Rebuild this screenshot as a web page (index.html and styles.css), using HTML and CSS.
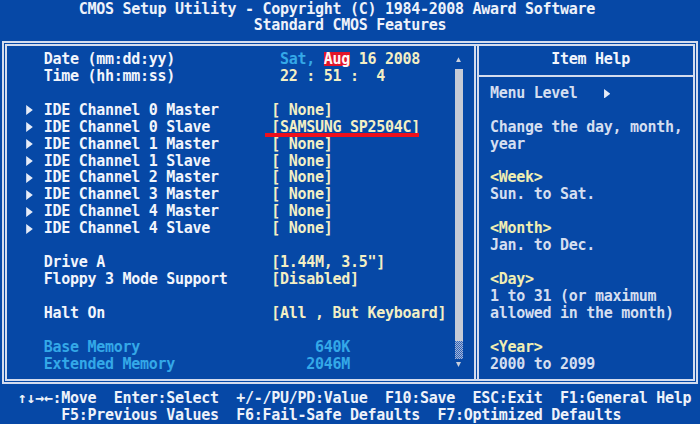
FILE: index.html
```html
<!DOCTYPE html>
<html lang="en">
<head>
<meta charset="utf-8">
<title>CMOS Setup Utility - Standard CMOS Features</title>
<link rel="stylesheet" href="styles.css">
</head>
<body>
<div class="screen">
  <header class="title">
    <div class="line t1">CMOS Setup Utility - Copyright (C) 1984-2008 Award Software</div>
    <div class="line t2">Standard CMOS Features</div>
  </header>

  <main class="box">
    <section class="left">
      <div class="list">
        <div class="row"><span class="arr"></span><span class="label">Date (mm:dd:yy)</span><span class="val"> <span class="cyan">Sat,</span> <span class="sel">Aug</span> 16 2008</span></div>
        <div class="row"><span class="arr"></span><span class="label">Time (hh:mm:ss)</span><span class="val"> 22 : 51 :  4</span></div>
        <div class="row"></div>
        <div class="row"><span class="arr"><svg class="tri" viewBox="0 0 6 9" width="7" height="10"><polygon points="0,0 6,4.5 0,9"/></svg></span><span class="label">IDE Channel 0 Master</span><span class="val">[ None]</span></div>
        <div class="row"><span class="arr"><svg class="tri" viewBox="0 0 6 9" width="7" height="10"><polygon points="0,0 6,4.5 0,9"/></svg></span><span class="label">IDE Channel 0 Slave</span><span class="val mark">[SAMSUNG SP2504C]</span></div>
        <div class="row"><span class="arr"><svg class="tri" viewBox="0 0 6 9" width="7" height="10"><polygon points="0,0 6,4.5 0,9"/></svg></span><span class="label">IDE Channel 1 Master</span><span class="val">[ None]</span></div>
        <div class="row"><span class="arr"><svg class="tri" viewBox="0 0 6 9" width="7" height="10"><polygon points="0,0 6,4.5 0,9"/></svg></span><span class="label">IDE Channel 1 Slave</span><span class="val">[ None]</span></div>
        <div class="row"><span class="arr"><svg class="tri" viewBox="0 0 6 9" width="7" height="10"><polygon points="0,0 6,4.5 0,9"/></svg></span><span class="label">IDE Channel 2 Master</span><span class="val">[ None]</span></div>
        <div class="row"><span class="arr"><svg class="tri" viewBox="0 0 6 9" width="7" height="10"><polygon points="0,0 6,4.5 0,9"/></svg></span><span class="label">IDE Channel 3 Master</span><span class="val">[ None]</span></div>
        <div class="row"><span class="arr"><svg class="tri" viewBox="0 0 6 9" width="7" height="10"><polygon points="0,0 6,4.5 0,9"/></svg></span><span class="label">IDE Channel 4 Master</span><span class="val">[ None]</span></div>
        <div class="row"><span class="arr"><svg class="tri" viewBox="0 0 6 9" width="7" height="10"><polygon points="0,0 6,4.5 0,9"/></svg></span><span class="label">IDE Channel 4 Slave</span><span class="val">[ None]</span></div>
        <div class="row"></div>
        <div class="row"><span class="arr"></span><span class="label">Drive A</span><span class="val">[1.44M, 3.5"]</span></div>
        <div class="row"><span class="arr"></span><span class="label">Floppy 3 Mode Support</span><span class="val">[Disabled]</span></div>
        <div class="row"></div>
        <div class="row"><span class="arr"></span><span class="label">Halt On</span><span class="val">[All , But Keyboard]</span></div>
        <div class="row"></div>
        <div class="row info"><span class="arr"></span><span class="label">Base Memory</span><span class="val">     640K</span></div>
        <div class="row info"><span class="arr"></span><span class="label">Extended Memory</span><span class="val">    2046M</span></div>
      </div>
      <div class="scroll">
        <div class="sb-up"><svg viewBox="0 0 5 5" width="5" height="5.3"><polygon points="2.5,0 5,5 0,5"/></svg></div>
        <div class="sb-track"></div>
        <div class="sb-hatch"></div>
        <div class="sb-down"><svg viewBox="0 0 5 5" width="5" height="5"><polygon points="0,0 5,0 2.5,5"/></svg></div>
      </div>
    </section>

    <aside class="help">
      <div class="help-head">Item Help</div>
      <div class="sep"></div>
      <div class="help-body">
        <p class="menu">Menu Level   <svg class="tri" viewBox="0 0 6 9" width="6.5" height="9.5"><polygon points="0,0 6,4.5 0,9"/></svg></p>
        <p>Change the day, month, year</p>
        <p><span class="key">&lt;Week&gt;</span><br>Sun. to Sat.</p>
        <p><span class="key">&lt;Month&gt;</span><br>Jan. to Dec.</p>
        <p><span class="key">&lt;Day&gt;</span><br>1 to 31 (or maximum allowed in the month)</p>
        <p><span class="key">&lt;Year&gt;</span><br>2000 to 2099</p>
      </div>
    </aside>
  </main>

  <footer class="keys">
    <div class="line k1">↑↓→←:Move  Enter:Select  +/-/PU/PD:Value  F10:Save  ESC:Exit  F1:General Help</div>
    <div class="line k2">F5:Previous Values  F6:Fail-Safe Defaults  F7:Optimized Defaults</div>
  </footer>
</div>
</body>
</html>
```

FILE: styles.css
```css
:root {
  --c: 8.75px;
  --r: 16.96px;
  --blue: #0648a6;
  --line: #d4dcee;
  --white: #eef2fa;
  --val: #f3efc4;
  --cyan: #34a8e8;
  --help: #d4def0;
  --key: #f0eeb2;
}

html, body {
  margin: 0;
  background: var(--blue);
}

body {
  width: 700px;
  height: 424px;
  overflow: hidden;
  font-family: "DejaVu Sans Mono", "Liberation Mono", monospace;
  font-weight: bold;
  font-size: 15px;
  line-height: var(--r);
  letter-spacing: -0.28px;
  color: var(--white);
}

.screen {
  padding-top: 0.5px;
}

.line {
  height: var(--r);
  white-space: pre;
}

.t1 { padding-left: calc(var(--c) * 9); }
.t2 { padding-left: calc(var(--c) * 29); }

.box {
  margin: 6.5px 0 0 2px;
  width: 696px;
  height: 343px;
  box-sizing: border-box;
  border: 5px double var(--line);
  display: flex;
}

.left {
  width: 467px;
  flex: 0 0 467px;
  display: flex;
  padding-top: 4.9px;
  box-sizing: border-box;
}

.list {
  width: 448px;
  flex: 0 0 448px;
  box-sizing: border-box;
  padding-left: calc(1.75px + var(--c) * 2);
}

.row {
  height: var(--r);
  display: grid;
  grid-template-columns: calc(var(--c) * 2) calc(var(--c) * 26) auto;
  white-space: pre;
}

.arr {
  display: flex;
  align-items: center;
}

.tri {
  fill: #e6ecf8;
}

.label {
  color: #f2f5fc;
}

.val {
  color: var(--val);
  justify-self: start;
}

.cyan {
  color: var(--cyan);
}

.sel {
  display: inline-block;
  line-height: 14px;
  background: #e2152a;
  color: #fff4f4;
}

.mark {
  position: relative;
}

.mark::after {
  content: "";
  position: absolute;
  left: -6px;
  right: 1.5px;
  top: 14.34px;
  height: 4px;
  background: #ee0f1c;
}

.info .label,
.info .val {
  color: var(--cyan);
}

.scroll {
  width: 7.5px;
  flex: 0 0 7.5px;
  display: flex;
  flex-direction: column;
}

.scroll svg {
  fill: #c9cfdc;
}

.sb-up {
  height: var(--r);
  display: flex;
  align-items: center;
  justify-content: center;
}

.sb-track {
  margin-top: 1.4px;
  height: 271.5px;
  background: #c6cbd6;
}

.sb-hatch {
  height: 18px;
  background: repeating-conic-gradient(#a7b5d6 0 25%, #2f64b9 0 50%) 0 0 / 2px 2px;
}

.sb-down {
  flex: 1;
  display: flex;
  justify-content: center;
  align-items: flex-start;
  padding-top: 3px;
}

.help {
  flex: 1;
  border-left: 5px double var(--line);
  padding-top: 4.9px;
  color: var(--help);
}

.help-head {
  height: var(--r);
  padding-left: calc(11px + var(--c) * 7);
  color: #f2f5fc;
  white-space: pre;
}

.sep {
  height: var(--r);
  display: flex;
  align-items: center;
}

.sep::before {
  content: "";
  flex: 1;
  height: 2px;
  background: var(--line);
}

.help-body {
  padding: 0 4px 0 11px;
}

.help-body p {
  margin: 0 0 var(--r);
}

.menu {
  white-space: pre;
}

.menu .tri {
  vertical-align: -0.5px;
}

.key {
  color: var(--key);
}

.keys {
  margin-top: 6.16px;
}

.k1 { padding-left: calc(var(--c) * 2); }
.k2 { padding-left: calc(var(--c) * 7); }
```
